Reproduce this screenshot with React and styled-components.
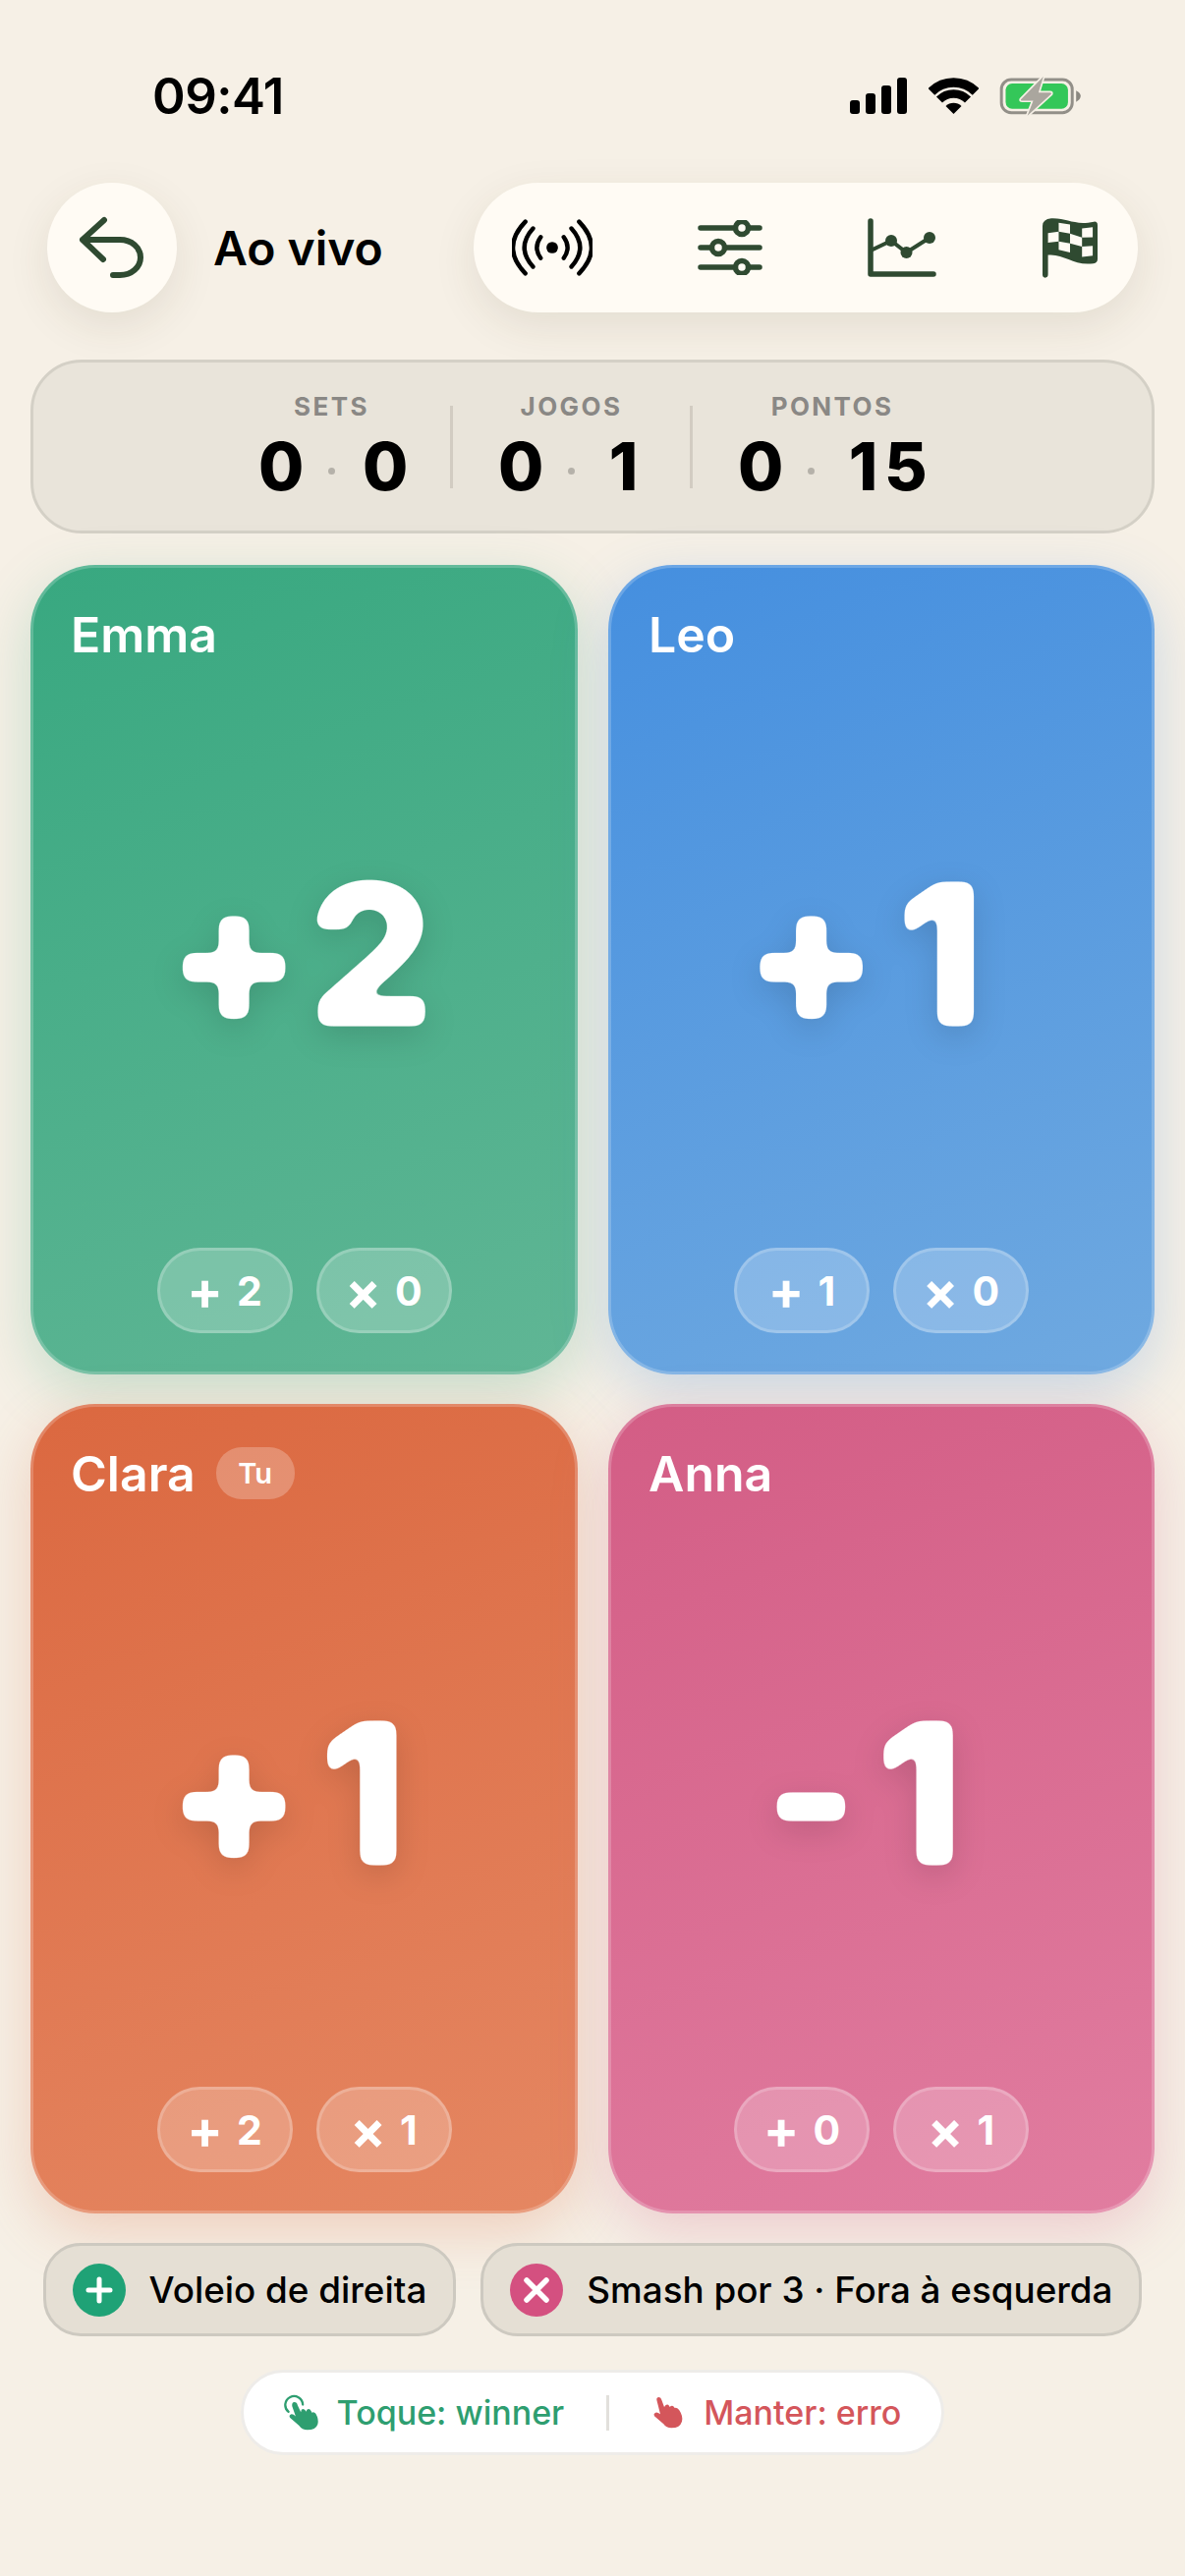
import React from "react";
import styled, { createGlobalStyle } from "styled-components";

const Global = createGlobalStyle`
  html, body {
    margin: 0;
    background: #f6f0e6;
  }
  body {
    font-family: Inter, "Liberation Sans", sans-serif;
  }
`;

const Page = styled.div`
  width: 1206px;
  height: 2622px;
  box-sizing: border-box;
  padding: 78px 31px 0;
  display: flex;
  flex-direction: column;
  overflow: hidden;
  background: #f6f0e6;
`;
const FilterDefs = styled.svg`
  display: block;
  width: 0;
  height: 0;
`;

const StatusBar = styled.div`
  height: 39px;
  display: flex;
  align-items: center;
  justify-content: space-between;
  padding: 0 75px 0 124px;
`;
const Clock = styled.div`
  font-size: 51px;
  font-weight: 600;
  line-height: 39px;
  color: #000;
  letter-spacing: -0.5px;
`;
const StatusIcons = styled.div`
  display: flex;
  align-items: center;
  gap: 22px;
`;

const Header = styled.div`
  height: 132px;
  margin-top: 69px;
  padding: 0 17px;
  display: flex;
  align-items: center;
`;
const BackButton = styled.div`
  width: 132px;
  height: 132px;
  border-radius: 50%;
  background: #fffbf4;
  box-shadow: 0 14px 44px rgba(70, 60, 30, 0.1);
  display: flex;
  align-items: center;
  justify-content: center;
`;
const Title = styled.div`
  margin-left: 37px;
  flex: 1;
  font-size: 48px;
  font-weight: 600;
  color: #000;
`;
const Toolbar = styled.div`
  width: 676px;
  height: 132px;
  box-sizing: border-box;
  padding: 0 40px 0 39px;
  border-radius: 66px;
  background: #fffbf4;
  box-shadow: 0 14px 44px rgba(70, 60, 30, 0.1);
  display: flex;
  align-items: center;
  justify-content: space-between;
`;

const ScorePanel = styled.div`
  height: 177px;
  margin-top: 48px;
  box-sizing: border-box;
  border: 3px solid #d4d0c6;
  border-radius: 52px;
  background: #e9e4da;
  display: flex;
  align-items: center;
  justify-content: center;
  gap: 46px;
`;
const ScoreGroup = styled.div`
  display: flex;
  flex-direction: column;
  align-items: center;
  gap: 18px;
  margin-top: -3px;
`;
const ScoreLabel = styled.div`
  font-size: 26px;
  line-height: 26px;
  font-weight: 700;
  letter-spacing: 2.4px;
  color: #8a8885;
`;
const ScoreValues = styled.div`
  display: flex;
  align-items: center;
  gap: 28px;
`;
const ScoreNum = styled.div`
  display: flex;
  font-size: 67px;
  line-height: 60px;
  font-weight: 800;
  color: #000;
`;
const ScoreDigit = styled.span`
  width: 43px;
  text-align: center;
`;
const ScoreDot = styled.div`
  width: 7px;
  height: 7px;
  margin-top: 8px;
  border-radius: 50%;
  background: #b5b1a9;
`;
const ScoreDivider = styled.div`
  width: 3px;
  height: 84px;
  background: #d2ccc2;
`;

const Cards = styled.div`
  margin-top: 32px;
  display: grid;
  grid-template-columns: 557px 556px;
  grid-template-rows: 824px 824px;
  gap: 30px 31px;
`;
const Card = styled.div`
  box-sizing: border-box;
  padding: 41px 38px 39px;
  border: 3px solid rgba(255, 255, 255, 0.2);
  border-radius: 66px;
  background: linear-gradient(160deg, ${(p) => p.$from}, ${(p) => p.$to});
  background-origin: border-box;
  box-shadow: 0 18px 56px ${(p) => p.$glow};
  display: flex;
  flex-direction: column;
  color: #fff;
`;
const NameRow = styled.div`
  height: 53px;
  display: flex;
  align-items: center;
  gap: 21px;
`;
const Name = styled.div`
  font-size: 50px;
  font-weight: 600;
`;
const YouBadge = styled.div`
  width: 80px;
  height: 53px;
  border-radius: 26px;
  background: rgba(255, 255, 255, 0.24);
  display: flex;
  align-items: center;
  justify-content: center;
  font-size: 29px;
  font-weight: 600;
`;
const BigValue = styled.div`
  flex: 1;
  display: flex;
  align-items: center;
  justify-content: center;
  padding-right: 8px;
`;
const BigGlyphs = styled.div`
  display: flex;
  gap: 8px;
  font-size: 198px;
  line-height: 1;
  font-weight: 800;
  filter: url(#soften) drop-shadow(0 10px 16px rgba(0, 0, 0, 0.13));
`;
const BigDigit = styled.span`
  box-sizing: border-box;
  width: 127px;
  padding-right: ${(p) => (p.$narrow ? 16 : 0)}px;
  text-align: center;
`;
const CountRow = styled.div`
  display: flex;
  justify-content: center;
  gap: 24px;
`;
const CountPill = styled.div`
  width: 138px;
  height: 87px;
  box-sizing: border-box;
  border: 3px solid rgba(255, 255, 255, 0.2);
  border-radius: 44px;
  background: rgba(255, 255, 255, 0.22);
  display: flex;
  align-items: center;
  justify-content: center;
  gap: 14px;
  font-size: 41px;
  font-weight: 700;
`;
const CountSign = styled.span`
  font-size: 54px;
  line-height: 1;
`;

const Chips = styled.div`
  margin-top: 30px;
  display: flex;
  justify-content: center;
  gap: 25px;
`;
const Chip = styled.div`
  height: 95px;
  box-sizing: border-box;
  padding: 0 27px;
  border: 3px solid #cdc9c0;
  border-radius: 38px;
  background: #e5dfd4;
  display: flex;
  align-items: center;
  gap: 24px;
  font-size: 36.8px;
  font-weight: 500;
  color: #000;
  white-space: nowrap;
`;
const ChipIcon = styled.div`
  width: 54px;
  height: 54px;
  border-radius: 50%;
  background: ${(p) => p.$color};
  display: flex;
  align-items: center;
  justify-content: center;
`;

const Hint = styled.div`
  height: 87px;
  margin-top: 34px;
  align-self: center;
  box-sizing: border-box;
  padding: 0 41px;
  border: 3px solid #eeece9;
  border-radius: 44px;
  background: #fff;
  display: flex;
  align-items: center;
  font-size: 34px;
  font-weight: 500;
  white-space: nowrap;
`;
const HintItem = styled.div`
  display: flex;
  align-items: center;
  gap: ${(p) => p.$gap}px;
  color: ${(p) => p.$color};
`;
const HintDivider = styled.div`
  width: 3px;
  height: 36px;
  margin: 0 44px 0 43px;
  background: #e2e0dc;
`;

const GREEN = "#2f4a31";

const Signal = () => (
  <svg width="58" height="37" viewBox="0 0 58 37">
    <rect x="0" y="23" width="10" height="14" rx="3" />
    <rect x="16" y="16" width="10" height="21" rx="3" />
    <rect x="32" y="8" width="10" height="29" rx="3" />
    <rect x="48" y="0" width="10" height="37" rx="3" />
  </svg>
);

const Wifi = () => (
  <svg width="51" height="37" viewBox="0 0 51 37">
    <path d="M2.9 14.4A32 32 0 0 1 48.1 14.4" fill="none" stroke="#000" strokeWidth="9.5" />
    <path d="M11 22.5A20.5 20.5 0 0 1 40 22.5" fill="none" stroke="#000" strokeWidth="8.5" />
    <path d="M25.5 37L17.5 29A11.3 11.3 0 0 1 33.5 29Z" />
  </svg>
);

const Battery = () => (
  <svg width="82" height="39" viewBox="25 22 247 118" style={{ overflow: "visible" }}>
    <rect x="28" y="31" width="218" height="102" rx="30" fill="none" stroke="#928f88" strokeWidth="9" />
    <rect x="41" y="43" width="192" height="78" rx="20" fill="#34c759" />
    <path d="M258 65Q272 72 272 82Q272 92 258 100Z" fill="#8b8880" />
    <path
      d="M157 22L88 92Q86 96 92 96H126L108 142L181 76Q184 71 178 71H142Z"
      fill="#aaa69e"
      stroke="#f6f0e6"
      strokeWidth="10"
      paintOrder="stroke"
      strokeLinejoin="round"
    />
  </svg>
);

const BackIcon = () => (
  <svg width="72" height="72" viewBox="0 0 72 72" fill="none" stroke={GREEN} strokeWidth="6" strokeLinecap="round" strokeLinejoin="round">
    <path d="M28 8L6 28L27 48M6 28H44C56 28 65 36 65 46C65 56 56 64 44 64H37" />
  </svg>
);

const AntennaIcon = () => (
  <svg width="82" height="60" viewBox="-42 -30 84 60" fill="none" stroke="#000" strokeWidth="4.5" strokeLinecap="round">
    <path d="M-28 -27Q-54 0 -28 27M28 -27Q54 0 28 27" />
    <path d="M-20 -20Q-38 0 -20 20M20 -20Q38 0 20 20" />
    <path d="M-12 -11Q-20 0 -12 11M12 -11Q20 0 12 11" />
    <circle r="6" fill="#000" stroke="none" />
  </svg>
);

const SlidersIcon = () => (
  <svg width="66" height="56" viewBox="0 0 66 56" fill="none" stroke={GREEN} strokeWidth="5.5" strokeLinecap="round">
    <path d="M3 8H63M3 28H63M3 48H63" />
    <circle cx="45" cy="8" r="6.5" fill="#fffbf4" />
    <circle cx="21" cy="28" r="6.5" fill="#fffbf4" />
    <circle cx="45" cy="48" r="6.5" fill="#fffbf4" />
  </svg>
);

const ChartIcon = () => (
  <svg width="70" height="60" viewBox="0 0 70 60" fill="none" stroke={GREEN} strokeLinecap="round">
    <path d="M3 3V57H67" strokeWidth="5.5" strokeLinejoin="round" />
    <path d="M3 33L24 23L39.5 35L63 20" strokeWidth="4" />
    <g fill={GREEN} stroke="none">
      <circle cx="24" cy="23" r="6" />
      <circle cx="39.5" cy="35" r="6" />
      <circle cx="63" cy="20" r="6" />
    </g>
  </svg>
);

const FlagIcon = () => (
  <svg width="58" height="64" viewBox="30 30 176 194">
    <path
      d="M33 60Q33 40 60 37C110 35 130 60 192 47Q203 46 203 58V163Q203 175 190 176C130 185 100 145 50 150V210Q50 220 41 220Q33 220 33 210Z"
      fill={GREEN}
    />
    <g fill="#fffbf4">
      <path d="M83 50L118 56V84L83 78Z" />
      <path d="M155 68L188 64V95L155 96Z" />
      <path d="M50 82L83 78V108L50 112Z" />
      <path d="M118 84L155 96V124L118 114Z" />
      <path d="M83 108L118 114V142L83 134Z" />
      <path d="M155 124L188 122V152L155 156Z" />
    </g>
  </svg>
);

const TapHand = () => (
  <svg width="37" height="39" viewBox="26 28 112 116" fill="#2e9e70">
    <path d="M40 84A27 27 0 1 1 84 62" fill="none" stroke="#2e9e70" strokeWidth="7" strokeLinecap="round" />
    <path d="M51 66Q50 54 58 54Q66 54 68 64L78 85L80 78Q86 72 92 80L94 84L97 78Q104 72 110 82L112 87Q118 82 124 90Q134 108 130 122Q124 140 98 140Q82 140 72 126L45 103Q40 96 47 92Q54 90 62 98Z" />
  </svg>
);

const HoldHand = () => (
  <svg width="32" height="34" viewBox="24 28 96 100" fill="#d4565b">
    <path d="M37 38Q36 30 44 30Q50 30 52 38L60 60L64 55Q70 50 75 56L77 60Q84 52 90 60L92 63Q100 60 106 70Q118 88 114 104Q108 124 82 124Q66 124 58 112L30 88Q26 82 32 78Q38 74 48 82Z" />
  </svg>
);

const PlusMark = () => (
  <svg width="28" height="28" viewBox="0 0 28 28" stroke="#fff" strokeWidth="5" strokeLinecap="round">
    <path d="M14 3V25M3 14H25" />
  </svg>
);

const CrossMark = () => (
  <svg width="28" height="28" viewBox="0 0 28 28" stroke="#fff" strokeWidth="5.5" strokeLinecap="round">
    <path d="M4 4L24 24M24 4L4 24" />
  </svg>
);

const scores = [
  { label: "SETS", a: "0", b: "0" },
  { label: "JOGOS", a: "0", b: "1" },
  { label: "PONTOS", a: "0", b: "15" },
];

const players = [
  { name: "Emma", sign: "+", digit: "2", plus: 2, minus: 0, from: "#38a880", to: "#60b695", glow: "rgba(58, 168, 128, 0.25)" },
  { name: "Leo", sign: "+", digit: "1", plus: 1, minus: 0, from: "#458fdf", to: "#6fa9e0", glow: "rgba(70, 145, 224, 0.25)" },
  { name: "Clara", you: true, sign: "+", digit: "1", plus: 2, minus: 1, from: "#db6840", to: "#e58762", glow: "rgba(220, 106, 67, 0.25)" },
  { name: "Anna", sign: "-", digit: "1", plus: 0, minus: 1, from: "#d35d85", to: "#e17da0", glow: "rgba(212, 95, 135, 0.25)" },
];

const Digits = ({ value }) => (
  <ScoreNum>
    {value.split("").map((d, i) => (
      <ScoreDigit key={i}>{d}</ScoreDigit>
    ))}
  </ScoreNum>
);

const App = () => (
  <Page>
    <Global />
    <FilterDefs aria-hidden="true">
      <filter id="soften" x="-10%" y="-10%" width="120%" height="120%" colorInterpolationFilters="sRGB">
        <feGaussianBlur stdDeviation="6" />
        <feComponentTransfer>
          <feFuncA type="linear" slope="14" intercept="-5" />
        </feComponentTransfer>
      </filter>
    </FilterDefs>
    <StatusBar>
      <Clock>09:41</Clock>
      <StatusIcons>
        <Signal />
        <Wifi />
        <Battery />
      </StatusIcons>
    </StatusBar>

    <Header>
      <BackButton>
        <BackIcon />
      </BackButton>
      <Title>Ao vivo</Title>
      <Toolbar>
        <AntennaIcon />
        <SlidersIcon />
        <ChartIcon />
        <FlagIcon />
      </Toolbar>
    </Header>

    <ScorePanel>
      {scores.map((s, i) => (
        <React.Fragment key={s.label}>
          {i > 0 && <ScoreDivider />}
          <ScoreGroup>
            <ScoreLabel>{s.label}</ScoreLabel>
            <ScoreValues>
              <Digits value={s.a} />
              <ScoreDot />
              <Digits value={s.b} />
            </ScoreValues>
          </ScoreGroup>
        </React.Fragment>
      ))}
    </ScorePanel>

    <Cards>
      {players.map((p) => (
        <Card key={p.name} $from={p.from} $to={p.to} $glow={p.glow}>
          <NameRow>
            <Name>{p.name}</Name>
            {p.you && <YouBadge>Tu</YouBadge>}
          </NameRow>
          <BigValue>
            <BigGlyphs>
              <span>{p.sign}</span>
              <BigDigit $narrow={p.digit === "1"}>{p.digit}</BigDigit>
            </BigGlyphs>
          </BigValue>
          <CountRow>
            <CountPill>
              <CountSign>+</CountSign>
              <span>{p.plus}</span>
            </CountPill>
            <CountPill>
              <CountSign>×</CountSign>
              <span>{p.minus}</span>
            </CountPill>
          </CountRow>
        </Card>
      ))}
    </Cards>

    <Chips>
      <Chip>
        <ChipIcon $color="#1fa276">
          <PlusMark />
        </ChipIcon>
        Voleio de direita
      </Chip>
      <Chip>
        <ChipIcon $color="#d45080">
          <CrossMark />
        </ChipIcon>
        Smash por 3 · Fora à esquerda
      </Chip>
    </Chips>

    <Hint>
      <HintItem $color="#2e9e70" $gap={17}>
        <TapHand />
        Toque: winner
      </HintItem>
      <HintDivider />
      <HintItem $color="#d4565b" $gap={20}>
        <HoldHand />
        Manter: erro
      </HintItem>
    </Hint>
  </Page>
);

export default App;
